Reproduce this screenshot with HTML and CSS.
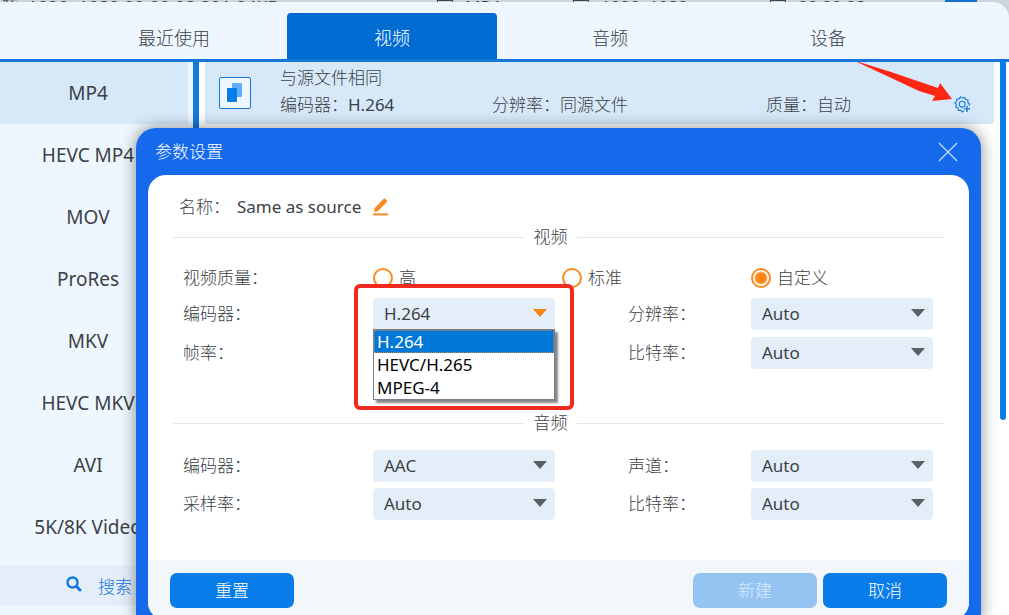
FILE: index.html
```html
<!DOCTYPE html>
<html lang="zh-CN">
<head>
    <meta charset="UTF-8">
    <title>参数设置</title>
    <link rel="stylesheet" href="styles.css">
</head>
<body>
<div class="source">
    <span class="source-info">源: 1920x1080 00:00:08 301.94KB</span>
    <span class="source-item"><i class="mark"></i>MP4</span>
    <span class="source-item"><i class="mark"></i>1920x1080</span>
    <span class="source-item"><i class="mark"></i>00:00:08</span>
    <span class="source-btn"></span>
</div>

<div class="panel">
    <nav class="tabs">
        <button class="tab">最近使用</button>
        <button class="tab active">视频</button>
        <button class="tab">音频</button>
        <button class="tab">设备</button>
    </nav>
    <div class="content">
        <aside class="side">
            <div class="formats">
                <a class="active" href="#">MP4</a>
                <a href="#">HEVC MP4</a>
                <a href="#">MOV</a>
                <a href="#">ProRes</a>
                <a href="#">MKV</a>
                <a href="#">HEVC MKV</a>
                <a href="#">AVI</a>
                <a href="#">5K/8K Video</a>
            </div>
            <label class="search">
                <svg width="16" height="16" viewBox="0 0 16 16" fill="none" stroke="#1478dc">
                    <circle cx="6.5" cy="6.5" r="5" stroke-width="2.4"/>
                    <path d="M10.4 10.4L14 14" stroke-width="3" stroke-linecap="round"/>
                </svg>
                <input type="search" placeholder="搜索" aria-label="搜索">
            </label>
        </aside>
        <div class="side-bar"></div>
        <main class="list">
            <div class="preset">
                <div class="preset-icon">
                    <svg width="32" height="32" viewBox="0 0 32 32">
                        <rect x="13" y="6" width="10" height="14" rx="1" fill="#5eaefb"/>
                        <rect x="8" y="11" width="10" height="14" rx="1" fill="#087ce8"/>
                    </svg>
                </div>
                <div class="preset-text">
                    <div class="preset-name">与源文件相同</div>
                    <div>编码器：<span class="latin">H.264</span></div>
                    <div>分辨率：同源文件</div>
                    <div>质量：自动</div>
                </div>
                <button class="gear" aria-label="参数设置">
                    <svg width="17" height="17" viewBox="0 0 17 17" fill="none" stroke="#1478dc" stroke-width="1.1">
                        <path d="M10.2 14.6L8.2 16 6.7 14.2 4.3 14.4 4 12 1.6 11 2.5 8.7 .8 6.8 2.9 5.4 2.8 3 5.2 2.9 6.5 .8 8.4 2.2 10.7 1.4 11.7 3.6 14.1 4.1 13.8 6.4 15.8 8 14.8 9.6"/>
                        <circle cx="8.2" cy="8.2" r="2.9"/>
                        <path d="M13 9.8V16M9.9 12.9H16.2" stroke-width="1.4"/>
                    </svg>
                </button>
            </div>
        </main>
        <div class="list-bar"></div>
    </div>
</div>

<svg class="arrow" width="96" height="40" viewBox="0 0 96 40">
    <path d="M0 0L2 0 34 10 81 26 83 21 95 37 75 39 78 34 62 29 30 14Z" fill="#ff2616"/>
</svg>

<div class="dialog" role="dialog" aria-labelledby="title">
    <header class="dialog-head">
        <span id="title">参数设置</span>
        <button class="close" aria-label="关闭">
            <svg width="20" height="20" viewBox="0 0 20 20" stroke="#c3dafb" stroke-width="1.3">
                <path d="M1 1L19 19M19 1L1 19"/>
            </svg>
        </button>
    </header>
    <form class="card">
        <div class="name">
            <span>名称：</span>
            <span class="name-value latin">Same as source</span>
            <svg width="16" height="18" viewBox="0 0 16 18" fill="#f98a20">
                <path d="M1 14L1.6 10.2 10.4 1Q11.4 .2 12.4 1.1L13.6 2.3Q14.4 3.2 13.6 4.2L4.8 13.2Z"/>
                <rect x="0" y="15.4" width="15" height="2"/>
            </svg>
        </div>

        <h2 class="line">视频</h2>
        <div class="grid video">
            <span>视频质量：</span>
            <div class="radios">
                <label><input type="radio" name="quality">高</label>
                <label><input type="radio" name="quality">标准</label>
                <label><input type="radio" name="quality" checked>自定义</label>
            </div>

            <label for="vcodec">编码器：</label>
            <div class="select open">
                <select id="vcodec"><option>H.264</option></select>
                <ul class="options" role="listbox" aria-label="编码器">
                    <li class="on" role="option" aria-selected="true">H.264</li>
                    <li role="option">HEVC/H.265</li>
                    <li role="option">MPEG-4</li>
                </ul>
                <div class="frame"></div>
            </div>
            <label class="second" for="size">分辨率：</label>
            <div class="select"><select id="size"><option>Auto</option></select></div>

            <label for="fps">帧率：</label>
            <div class="select"><select id="fps"><option>Auto</option></select></div>
            <label class="second" for="vrate">比特率：</label>
            <div class="select"><select id="vrate"><option>Auto</option></select></div>
        </div>

        <h2 class="line">音频</h2>
        <div class="grid audio">
            <label for="acodec">编码器：</label>
            <div class="select"><select id="acodec"><option>AAC</option></select></div>
            <label class="second" for="channel">声道：</label>
            <div class="select"><select id="channel"><option>Auto</option></select></div>

            <label for="sample">采样率：</label>
            <div class="select"><select id="sample"><option>Auto</option></select></div>
            <label class="second" for="arate">比特率：</label>
            <div class="select"><select id="arate"><option>Auto</option></select></div>
        </div>

        <footer class="foot">
            <button type="reset" class="btn">重置</button>
            <button type="button" class="btn new" disabled>新建</button>
            <button type="button" class="btn">取消</button>
        </footer>
    </form>
</div>
</body>
</html>
```
FILE: styles.css
```css
*{
    padding: 0;
    margin: 0;
    box-sizing: border-box;
}
html,body{
    height: 100%;
}
body{
    display: flex;
    flex-direction: column;
    position: relative;
    overflow: hidden;
    background: #ccd4dc;
    color: #3c4146;
    font: 300 17px/24px "Noto Sans","Noto Sans CJK SC",sans-serif;
}
button,input,select{
    font: inherit;
    color: inherit;
    border: none;
    background: none;
}
a{
    color: inherit;
    text-decoration: none;
}
svg{
    display: block;
}
/* the latin face is thinner than the chinese one at 300 */
.latin,.formats,.select{
    font-weight: 400;
}

/* source file strip, mostly hidden behind the panel */
.source{
    display: grid;
    grid-template-columns: 437fr 136fr 197fr 175fr 64fr;
    align-items: end;
    height: 2px;
    overflow: hidden;
    font-weight: 400;
    line-height: 14px;
    white-space: nowrap;
}
.source-info{
    font-size: 18px;
}
.source-item{
    display: flex;
    gap: 12px;
}
.mark{
    width: 16px;
    border: 1px solid #42474d;
}
.source-btn{
    width: 32px;
    height: 14px;
    background: #1470cc;
}

.panel{
    flex: 1;
    display: flex;
    flex-direction: column;
    border-top-right-radius: 16px;
    background: #eef7ff;
    min-height: 0;
}
.tabs{
    display: flex;
    gap: 8px;
    padding: 11px 76px 0 69px;
    border-bottom: 3px solid #1477d8;
}
.tab{
    flex: 1;
    height: 46px;
    padding-top: 3px;
    border-radius: 4px 4px 0 0;
    font-size: 18px;
}
.tab.active{
    background: #006cd2;
    color: #fff;
}
.content{
    flex: 1;
    display: flex;
    min-height: 0;
    background: #fff;
}
.side{
    width: 193px;
    background: #eef7ff;
    font-size: 19px;
}
.formats{
    width: 188px;
    padding-bottom: 8px;
}
.formats a{
    display: block;
    padding-right: 12px;
    line-height: 62px;
    text-align: center;
}
.formats .active{
    background: #d7e8f9;
}
.search{
    display: flex;
    gap: 16px;
    height: 40px;
    padding-left: 66px;
    background: #e4eef9;
    font-size: 17px;
}
.search svg{
    margin-top: 10px;
}
.search input{
    width: 80px;
    height: 40px;
}
.search input::placeholder{
    color: #1478dc;
}
.side-bar{
    width: 6px;
    background: #1478dc;
}
.list{
    flex: 1;
    padding: 0 6px;
}
.preset{
    display: flex;
    align-items: center;
    height: 62px;
    padding: 0 23px 0 14px;
    border-radius: 0 0 3px 3px;
    background: #d7e8f9;
}
.preset-icon{
    width: 32px;
    height: 32px;
    border: 1px solid #1a74d4;
    border-radius: 2px;
    background: #eef7ff;
}
.preset-icon svg{
    margin: -1px;
}
.preset-text{
    flex: 1;
    display: grid;
    grid-template-columns: 212fr 274fr 188fr;
    row-gap: 3px;
    margin-left: 29px;
    padding-bottom: 3px;
}
.preset-name{
    grid-column: 1 / -1;
}
.gear{
    align-self: flex-end;
    padding-bottom: 11px;
}
.list-bar{
    width: 6px;
    height: 358px;
    margin-right: 3px;
    border-radius: 0 0 3px 3px;
    background: #087ce8;
}

.arrow{
    position: absolute;
    top: 62px;
    right: 56px;
}

.dialog{
    position: absolute;
    top: 128px;
    left: 136px;
    right: 28px;
    padding: 0 12px 12px;
    border-radius: 20px;
    background: #1569eb;
    box-shadow: 0 0 16px rgba(0,0,0,.45);
}
.dialog-head{
    display: flex;
    justify-content: space-between;
    align-items: center;
    height: 47px;
    padding: 0 11px 0 7px;
    color: #fff;
}
.card{
    border-radius: 18px;
    background: #fff;
    overflow: hidden;
}
.name{
    display: flex;
    align-items: center;
    padding: 20px 31px 6px;
}
.name-value{
    margin: 0 12px 0 7px;
}
.line{
    display: flex;
    align-items: center;
    gap: 9px;
    padding: 0 25px;
    font-size: 17px;
    font-weight: inherit;
}
.line::before,.line::after{
    content: "";
    flex: 22;
    height: 1px;
    background: #e6e7e9;
}
.line::after{
    flex: 23;
}
.grid{
    display: grid;
    grid-template-columns: 190px 1fr 196px 1fr;
    align-items: center;
    padding: 0 36px 0 35px;
}
.video{
    grid-template-rows: 26px 32px 32px;
    row-gap: 7px;
    padding-top: 16px;
    padding-bottom: 42px;
}
.audio{
    row-gap: 6px;
    padding-top: 15px;
    padding-bottom: 40px;
}
.second{
    padding-left: 73px;
}
.radios{
    grid-column: 2 / -1;
    display: grid;
    grid-template-columns: 1fr 1fr 182px;
}
.radios label{
    display: flex;
    align-items: center;
    gap: 6px;
}
.radios input{
    appearance: none;
    width: 20px;
    height: 20px;
    border: 2px solid #f98a20;
    border-radius: 50%;
    background: #fff;
}
.radios input:checked{
    background: radial-gradient(#ff8412 5px,#fff 7px);
}
.select{
    position: relative;
}
.select select{
    appearance: none;
    display: block;
    width: 100%;
    height: 32px;
    padding: 0 11px;
    border-radius: 4px;
    background: #e4eef9;
}
.select::after{
    content: "";
    position: absolute;
    top: 11px;
    right: 8px;
    border: 7px solid transparent;
    border-top: 8px solid #5b6064;
    border-bottom: none;
    pointer-events: none;
}
.open::after{
    border-top-color: #f98412;
}
.options{
    position: absolute;
    z-index: 1;
    top: 31px;
    left: 0;
    width: 100%;
    border: 1px solid #7a7f88;
    background: #fff;
    box-shadow: 3px 3px 2px #888;
    color: #000;
    line-height: 23px;
    list-style: none;
}
.options li{
    padding-left: 3px;
}
.options .on{
    background: #0078d7;
    color: #fff;
    outline: 1px dotted #c98a50;
    outline-offset: -1px;
}
.frame{
    position: absolute;
    z-index: 2;
    top: -14px;
    left: -19px;
    right: -19px;
    height: 126px;
    border: 4px solid #f02a20;
    border-radius: 6px;
    pointer-events: none;
}
/* the open list and its frame cover the field below */
.open + .second + .select + label + .select{
    visibility: hidden;
}
.foot{
    display: flex;
    gap: 6px;
    padding: 13px 22px 12px;
    background: #f3f7fc;
}
.btn{
    width: 124px;
    height: 35px;
    border-radius: 7px;
    background: #087ce8;
    color: #fff;
}
.new{
    margin-left: auto;
    background: #95c4f3;
    color: #d8eaff;
}
```
